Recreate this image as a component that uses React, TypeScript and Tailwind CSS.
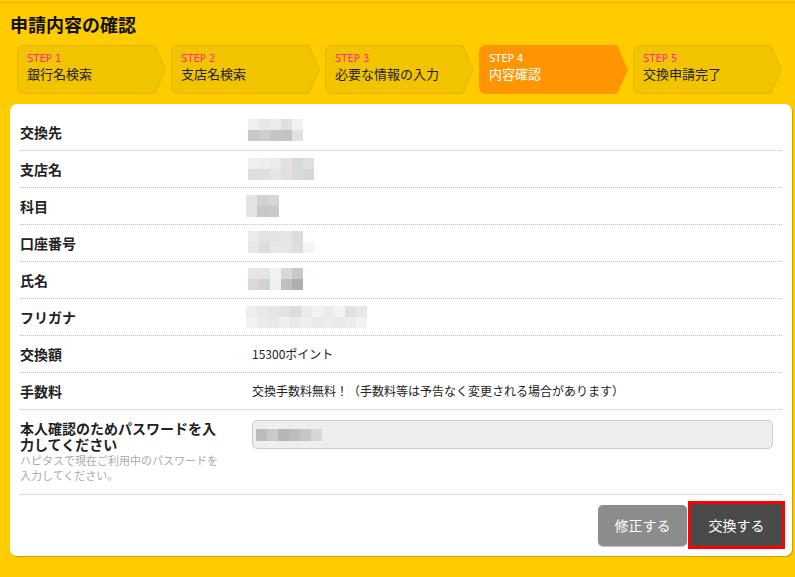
import React from 'react';

type Step = { no: number; label: string; active?: boolean };

const steps: Step[] = [
  { no: 1, label: '銀行名検索' },
  { no: 2, label: '支店名検索' },
  { no: 3, label: '必要な情報の入力' },
  { no: 4, label: '内容確認', active: true },
  { no: 5, label: '交換申請完了' },
];

// blurred (mosaic) values, one array per row of blocks
const mosaic: Record<string, string[][]> = {
  dest: [
    ['#f0eff0', '#e8e6e8', '#ebebeb', '#e2dfe1', '#f2f1f2'],
    ['#cbc7c8', '#cfcdd0', '#c6c5c6', '#c5c4c5', '#e3e1e3'],
  ],
  branch: [
    ['#f0efef', '#efeeee', '#ebebeb', '#e5e1e2', '#d8d7d9', '#dfdfe0'],
    ['#e0dfe0', '#e1e0e1', '#e6e6e6', '#e3dfe0', '#d9d9da', '#d4d6d8'],
  ],
  subject: [
    ['#e3e3e3', '#d2d1d1', '#d6d6d9'],
    ['#e5e4e2', '#c9c8c8', '#c6cacd'],
  ],
  account: [
    ['#ebebed', '#e3e3e0', '#e4e4e6', '#e5e5e2', '#dadcde', '#fdfefe'],
    ['#e8e6e8', '#dedcde', '#e8e8e9', '#e8e7e6', '#e0dedd', '#f4f5f7'],
  ],
  name: [
    ['#e9e5e4', '#e5e5e7', '#f1f2f2', '#d8d8d8', '#c9c8c8', '#fcfdfd'],
    ['#dad8d8', '#d2d1d3', '#eff0f0', '#bcc1c0', '#afafb0', '#ffffff'],
  ],
  kana: [
    ['#eceef0', '#e9e9e9', '#e6e6e6', '#e2e2e3', '#dddcdb', '#ebebeb', '#f3f2f1', '#ecebee', '#f4f3f1', '#e4e0e0', '#e5e7ea'],
    ['#f2f2f2', '#ebebeb', '#e9e9e9', '#eeeeed', '#e8e9e9', '#eeeeee', '#e9e9ea', '#ececec', '#eaeaea', '#ececec', '#f2f2f4'],
  ],
  password: [['#bdbcbc', '#c8cbcb', '#b5b5b8', '#bfbcbb', '#c6c6c6', '#d6d6d8']],
};

const Mosaic: React.FC<{ rows: string[][]; className?: string; tall?: boolean }> = ({ rows, className = '', tall }) => (
  <div className={`flex flex-col ${className}`}>
    {rows.map((row, i) => (
      <div key={i} className="flex">
        {row.map((c, j) => (
          <div key={j} className={tall ? 'w-[11px] h-[12px]' : 'w-[11px] h-[11px]'} style={{ backgroundColor: c }} />
        ))}
      </div>
    ))}
  </div>
);

const StepBox: React.FC<Step> = ({ no, label, active }) => (
  <div
    className={`w-[149px] h-[49px] p-px rounded-[7px] [clip-path:polygon(0_0,calc(100%_-_11px)_0,100%_50%,calc(100%_-_11px)_100%,0_100%)] ${
      active ? 'bg-[#ff9500]' : 'bg-[#e4b600]'
    }`}
  >
    <div
      className={`h-full rounded-[6px] pl-[9px] pt-[7px] [clip-path:polygon(0_0,calc(100%_-_11px)_0,100%_50%,calc(100%_-_11px)_100%,0_100%)] ${
        active ? 'bg-[#ff9500] text-white' : 'bg-[#f2c400] text-[#222]'
      }`}
    >
      <div className={`font-['DejaVu_Sans',sans-serif] text-[10px] leading-[12px] ${active ? 'text-white' : 'text-[#ff2a8c]'}`}>
        STEP {no}
      </div>
      <div className="text-[13px] leading-[18px] whitespace-nowrap">{label}</div>
    </div>
  </div>
);

const Row: React.FC<{ label: string; children: React.ReactNode }> = ({ label, children }) => (
  <div className="flex items-center h-[37px] border-b border-dotted border-[#c4c4c4]">
    <div className="w-[232px] shrink-0 text-[14px] font-bold text-[#222] leading-[18px]">{label}</div>
    <div className="flex-1 text-[12px] text-[#222] leading-[16px]">{children}</div>
  </div>
);

export default function App() {
  return (
    <div className="w-[795px] h-[577px] bg-[#ffcc00] pt-[2px] font-['Noto_Sans_CJK_JP',sans-serif] overflow-hidden">
      <div className="h-px bg-[#f2a800]" />
      <h1 className="pl-[10px] pt-[9px] text-[18px] font-bold leading-[24px] text-[#111]">申請内容の確認</h1>

      <div className="flex gap-[5px] pl-[17px] mt-[9px]">
        {steps.map((s) => (
          <StepBox key={s.no} {...s} />
        ))}
      </div>

      <div className="ml-[10px] mr-[3px] mt-[10px] bg-white rounded-[7px] shadow-[1px_1px_1px_rgba(0,0,0,0.22)] px-[10px] pt-[10px] pb-[7px]">
        <Row label="交換先">
          <Mosaic rows={mosaic.dest} className="-ml-[4px] -mt-[4px]" />
        </Row>
        <Row label="支店名">
          <Mosaic rows={mosaic.branch} className="-ml-[4px] -mt-[1px]" />
        </Row>
        <Row label="科目">
          <Mosaic rows={mosaic.subject} className="-ml-[6px]" />
        </Row>
        <Row label="口座番号">
          <Mosaic rows={mosaic.account} className="-ml-[4px] -mt-[3px]" />
        </Row>
        <Row label="氏名">
          <Mosaic rows={mosaic.name} className="-ml-[4px] -mt-[3px]" />
        </Row>
        <Row label="フリガナ">
          <Mosaic rows={mosaic.kana} className="-ml-[6px]" />
        </Row>
        <Row label="交換額">15300ポイント</Row>
        <Row label="手数料">交換手数料無料！（手数料等は予告なく変更される場合があります）</Row>

        <div className="flex items-start h-[85px] pt-[10px] border-b border-dotted border-[#c4c4c4]">
          <div className="w-[232px] shrink-0">
            <div className="w-[200px]">
              <div className="text-[14px] font-bold text-[#222] leading-[16px]">本人確認のためパスワードを入力してください</div>
              <div className="mt-px text-[11px] text-[#aaaaaa] leading-[15px]">ハピタスで現在ご利用中のパスワードを入力してください。</div>
            </div>
          </div>
          <div className="flex-1 pr-[9px]">
            <div className="h-[29px] rounded-[5px] border border-[#cccccc] bg-[#eeeeee] flex items-center pl-[3px]">
              <Mosaic rows={mosaic.password} tall />
            </div>
          </div>
        </div>

        <div className="flex justify-end items-center pt-[6px] -mr-[3px]">
          <button className="w-[89px] h-[41px] rounded-[5px] bg-[#8c8c8c] text-white text-[14px] shadow-[0_1px_1px_rgba(0,0,0,0.25)]">
            修正する
          </button>
          <div className="ml-px w-[97px] h-[48px] border-[3px] border-[#ff0000]">
            <button className="w-full h-full bg-[#4a4a4a] text-white text-[14px]">交換する</button>
          </div>
        </div>
      </div>
    </div>
  );
}
